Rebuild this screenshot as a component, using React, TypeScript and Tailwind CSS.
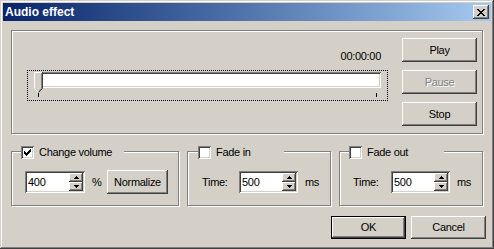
import React from "react";

// classic 3D bevels
const raised =
  "bg-[#d4d0c8] shadow-[inset_-1px_-1px_#404040,inset_1px_1px_#fff,inset_-2px_-2px_#808080,inset_2px_2px_#d4d0c8]";
const sunken =
  "shadow-[inset_1px_1px_#808080,inset_-1px_-1px_#fff,inset_2px_2px_#404040,inset_-2px_-2px_#d4d0c8]";
const etched = "border border-[#808080] shadow-[inset_1px_1px_#fff,1px_1px_#fff]";

const checkPx = [
  [6, 0], [5, 1], [6, 1], [0, 2], [4, 2], [5, 2], [6, 2], [0, 3], [1, 3], [3, 3], [4, 3], [5, 3],
  [0, 4], [1, 4], [2, 4], [3, 4], [4, 4], [1, 5], [2, 5], [3, 5], [2, 6],
];

const closePx = [
  [0, 0], [1, 0], [6, 0], [7, 0], [1, 1], [2, 1], [5, 1], [6, 1], [2, 2], [3, 2], [4, 2], [5, 2],
  [3, 3], [4, 3], [2, 4], [3, 4], [4, 4], [5, 4], [1, 5], [2, 5], [5, 5], [6, 5],
  [0, 6], [1, 6], [6, 6], [7, 6],
];

function Button({
  label,
  className = "",
  disabled = false,
  primary = false,
}: {
  label: string;
  className?: string;
  disabled?: boolean;
  primary?: boolean;
}) {
  return (
    <div
      className={`flex items-center justify-center ${
        primary
          ? "border border-black bg-[#d4d0c8] shadow-[inset_-1px_-1px_#404040,inset_1px_1px_#fff,inset_-2px_-2px_#808080]"
          : raised
      } ${className}`}
    >
      <span className={disabled ? "text-[#808080] [text-shadow:1px_1px_0_#fff]" : "text-black"}>{label}</span>
    </div>
  );
}

function Checkbox({ checked = false }: { checked?: boolean }) {
  return (
    <div className={`w-[13px] h-[13px] shrink-0 bg-white p-[3px] ${sunken}`}>
      {checked && (
        <svg width="7" height="7" shapeRendering="crispEdges" className="block">
          {checkPx.map(([x, y]) => (
            <rect key={`${x}-${y}`} x={x} y={y} width="1" height="1" fill="#000" />
          ))}
        </svg>
      )}
    </div>
  );
}

function Spin() {
  return (
    <div className="flex flex-col w-[14px] h-[18px] shrink-0">
      <div className={`${raised} h-[9px] flex items-center justify-center`}>
        <svg width="5" height="3" shapeRendering="crispEdges">
          <path d="M2 0h1v1h1v1h1v1H0V2h1V1h1z" fill="#000" />
        </svg>
      </div>
      <div className={`${raised} h-[9px] flex items-center justify-center`}>
        <svg width="5" height="3" shapeRendering="crispEdges">
          <path d="M0 0h5v1h-1v1h-1v1h-1V2H1V1H0z" fill="#000" />
        </svg>
      </div>
    </div>
  );
}

function SpinEdit({ value, width }: { value: string; width: string }) {
  return (
    <div className={`bg-white ${sunken} h-[22px] ${width} flex items-center p-[2px] shrink-0`}>
      <span className="flex-1 pl-[1px]">{value}</span>
      <Spin />
    </div>
  );
}

function Thumb() {
  return (
    <svg width="9" height="21" className="absolute left-0 top-0">
      <polygon points="0,0 9,0 9,16 4.5,21 0,16" fill="#d4d0c8" />
      <polyline points="0.5,16.5 0.5,0.5 8,0.5" fill="none" stroke="#fff" />
      <polyline points="0.5,16.5 4,20" fill="none" stroke="#fff" />
      <polyline points="7.5,1 7.5,16.3 4.5,19.5" fill="none" stroke="#808080" />
      <polyline points="8.5,0 8.5,16.5 4.5,20.5" fill="none" stroke="#404040" />
    </svg>
  );
}

export default function App() {
  return (
    <div className="w-[494px] h-[249px] bg-[#d4d0c8] p-[3px] flex flex-col shadow-[inset_-1px_-1px_#404040,inset_1px_1px_#d4d0c8,inset_-2px_-2px_#808080,inset_2px_2px_#fff] font-['Liberation_Sans',Arial,sans-serif] text-[11px] leading-[13px] text-black">
      {/* title bar */}
      <div className="flex h-[18px] mb-[1px] items-center justify-between bg-linear-to-r from-[#0a246a] to-[#a6caf0] pl-[2px] pr-[2px]">
        <span className="text-white font-bold text-[12px]">Audio effect</span>
        <div className={`${raised} w-[16px] h-[14px] flex items-center justify-center`}>
          <svg width="8" height="7" shapeRendering="crispEdges">
            {closePx.map(([x, y]) => (
              <rect key={`${x}-${y}`} x={x} y={y} width="1" height="1" fill="#000" />
            ))}
          </svg>
        </div>
      </div>

      <div className="flex-1 flex flex-col px-[8px] pt-[8px] tracking-[-0.3px]">
        {/* player */}
        <div className={`${etched} h-[104px] flex pl-[15px] pr-[5px]`}>
          <div className="flex flex-col w-[361px]">
            <div className="mt-[19px] h-[13px] text-right pr-[7px]">00:00:00</div>
            <div className="mt-[7px] h-[31px] border border-dotted border-black px-[6px] pt-[1px]">
              <div className={`relative h-[16px] bg-white ${sunken}`}>
                <Thumb />
              </div>
              <div className="flex justify-between px-[4px] mt-[5px]">
                <div className="w-[1px] h-[4px] bg-black" />
                <div className="w-[1px] h-[4px] bg-black" />
              </div>
            </div>
          </div>
          <div className="ml-auto flex flex-col gap-[8px] pt-[7px]">
            <Button label="Play" className="w-[75px] h-[24px]" />
            <Button label="Pause" disabled className="w-[75px] h-[24px]" />
            <Button label="Stop" className="w-[75px] h-[24px]" />
          </div>
        </div>

        {/* effects */}
        <div className="mt-[17px] flex gap-[8px]">
          <div className={`${etched} relative w-[168px] h-[55px]`}>
            <div className="absolute left-[9px] top-[-6px] w-[103px] h-[13px] bg-[#d4d0c8] flex items-center">
              <Checkbox checked />
              <span className="ml-[5px]">Change volume</span>
            </div>
            <div className="flex items-center pl-[13px] pt-[18px]">
              <SpinEdit value="400" width="w-[60px]" />
              <span className="ml-[7px] w-[15px]">%</span>
              <Button label="Normalize" className="w-[61px] h-[24px]" />
            </div>
          </div>

          <div className={`${etched} relative w-[144px] h-[55px]`}>
            <div className="absolute left-[10px] top-[-6px] w-[86px] h-[13px] bg-[#d4d0c8] flex items-center">
              <Checkbox />
              <span className="ml-[5px]">Fade in</span>
            </div>
            <div className="flex items-center pl-[14px] pt-[19px]">
              <span className="w-[37px]">Time:</span>
              <SpinEdit value="500" width="w-[59px]" />
              <span className="ml-[7px]">ms</span>
            </div>
          </div>

          <div className={`${etched} relative w-[144px] h-[55px]`}>
            <div className="absolute left-[9px] top-[-6px] w-[95px] h-[13px] bg-[#d4d0c8] flex items-center">
              <Checkbox />
              <span className="ml-[5px]">Fade out</span>
            </div>
            <div className="flex items-center pl-[13px] pt-[19px]">
              <span className="w-[38px]">Time:</span>
              <SpinEdit value="500" width="w-[59px]" />
              <span className="ml-[7px]">ms</span>
            </div>
          </div>
        </div>

        {/* dialog buttons */}
        <div className="mt-[10px] -mr-[3px] flex justify-end gap-[5px]">
          <Button label="OK" primary className="w-[75px] h-[23px]" />
          <Button label="Cancel" className="w-[75px] h-[23px]" />
        </div>
      </div>
    </div>
  );
}
